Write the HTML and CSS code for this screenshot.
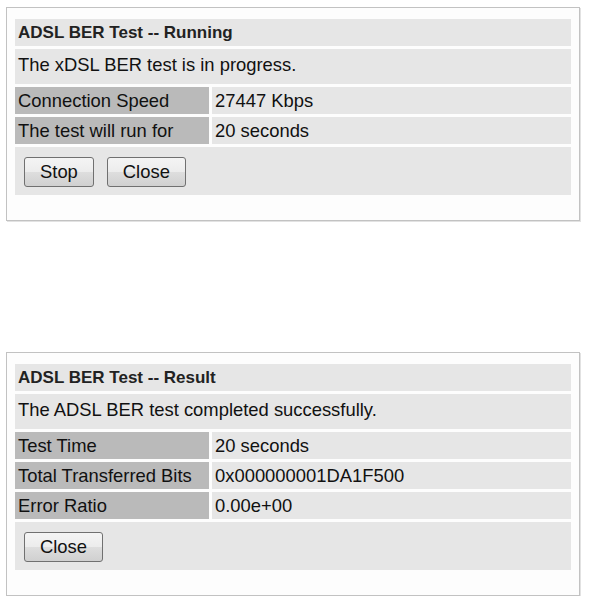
FILE: index.html
```html
<!DOCTYPE html>
<html lang="en">

<head>
    <meta charset="UTF-8">
    <meta name="viewport" content="width=device-width, initial-scale=1.0">
    <title>ADSL BER Test</title>
    <link rel="stylesheet" href="styles.css">
</head>

<body>
    <!-- running dialog -->
    <div class="ber-box" id="berRunning">
        <div class="ber-title">ADSL BER Test -- Running</div>
        <div class="ber-msg">The xDSL BER test is in progress.</div>
        <div class="ber-row">
            <div class="ber-label">Connection Speed</div>
            <div class="ber-value">27447 Kbps</div>
        </div>
        <div class="ber-row">
            <div class="ber-label">The test will run for</div>
            <div class="ber-value">20 seconds</div>
        </div>
        <div class="ber-buttons">
            <button class="ber-btn">Stop</button>
            <button class="ber-btn">Close</button>
        </div>
    </div>

    <!-- result dialog -->
    <div class="ber-box result" id="berResult">
        <div class="ber-title">ADSL BER Test -- Result</div>
        <div class="ber-msg">The ADSL BER test completed successfully.</div>
        <div class="ber-row">
            <div class="ber-label">Test Time</div>
            <div class="ber-value">20 seconds</div>
        </div>
        <div class="ber-row">
            <div class="ber-label">Total Transferred Bits</div>
            <div class="ber-value">0x000000001DA1F500</div>
        </div>
        <div class="ber-row">
            <div class="ber-label">Error Ratio</div>
            <div class="ber-value">0.00e+00</div>
        </div>
        <div class="ber-buttons">
            <button class="ber-btn">Close</button>
        </div>
    </div>
</body>

</html>
```

FILE: styles.css
```css
body {
    margin: 0;
    padding: 7px 0 0 6px;
    background-color: #fff;
    font-family: "Liberation Sans", Arial, sans-serif;
    font-size: 18.4px;
    color: #111;
}

.ber-box {
    width: 556px;
    padding: 11px 8px 25px 8px;
    border: 1px solid #c2c2c2;
    box-shadow: 1px 1px 0 #e2e2e2;
    background-color: #fdfdfd;
    display: flex;
    flex-direction: column;
    gap: 3px;
}

.ber-box.result {
    margin-top: 131px;
}

.ber-title {
    background-color: #e6e6e6;
    line-height: 27px;
    padding-left: 3px;
    font-size: 17px;
    font-weight: bold;
    color: #222;
}

.ber-msg {
    background-color: #e6e6e6;
    line-height: 27px;
    padding: 2px 0 6px 3px;
}

.ber-row {
    display: grid;
    grid-template-columns: 194px 1fr;
    gap: 3px;
    line-height: 27px;
}

.ber-label {
    background-color: #bababa;
    padding-left: 3px;
    white-space: nowrap;
}

.ber-value {
    background-color: #e6e6e6;
    padding-left: 3px;
}

.ber-buttons {
    background-color: #e6e6e6;
    display: flex;
    gap: 13px;
    padding: 10px 9px 8px 9px;
}

.ber-btn {
    height: 30px;
    padding: 0 15px;
    font-family: "Liberation Sans", Arial, sans-serif;
    font-size: 18.4px;
    color: #111;
    border: 1px solid #707070;
    border-radius: 3px;
    background: linear-gradient(#f4f4f4, #ececec 50%, #dedede 50%, #d0d0d0);
    cursor: pointer;
}
```
